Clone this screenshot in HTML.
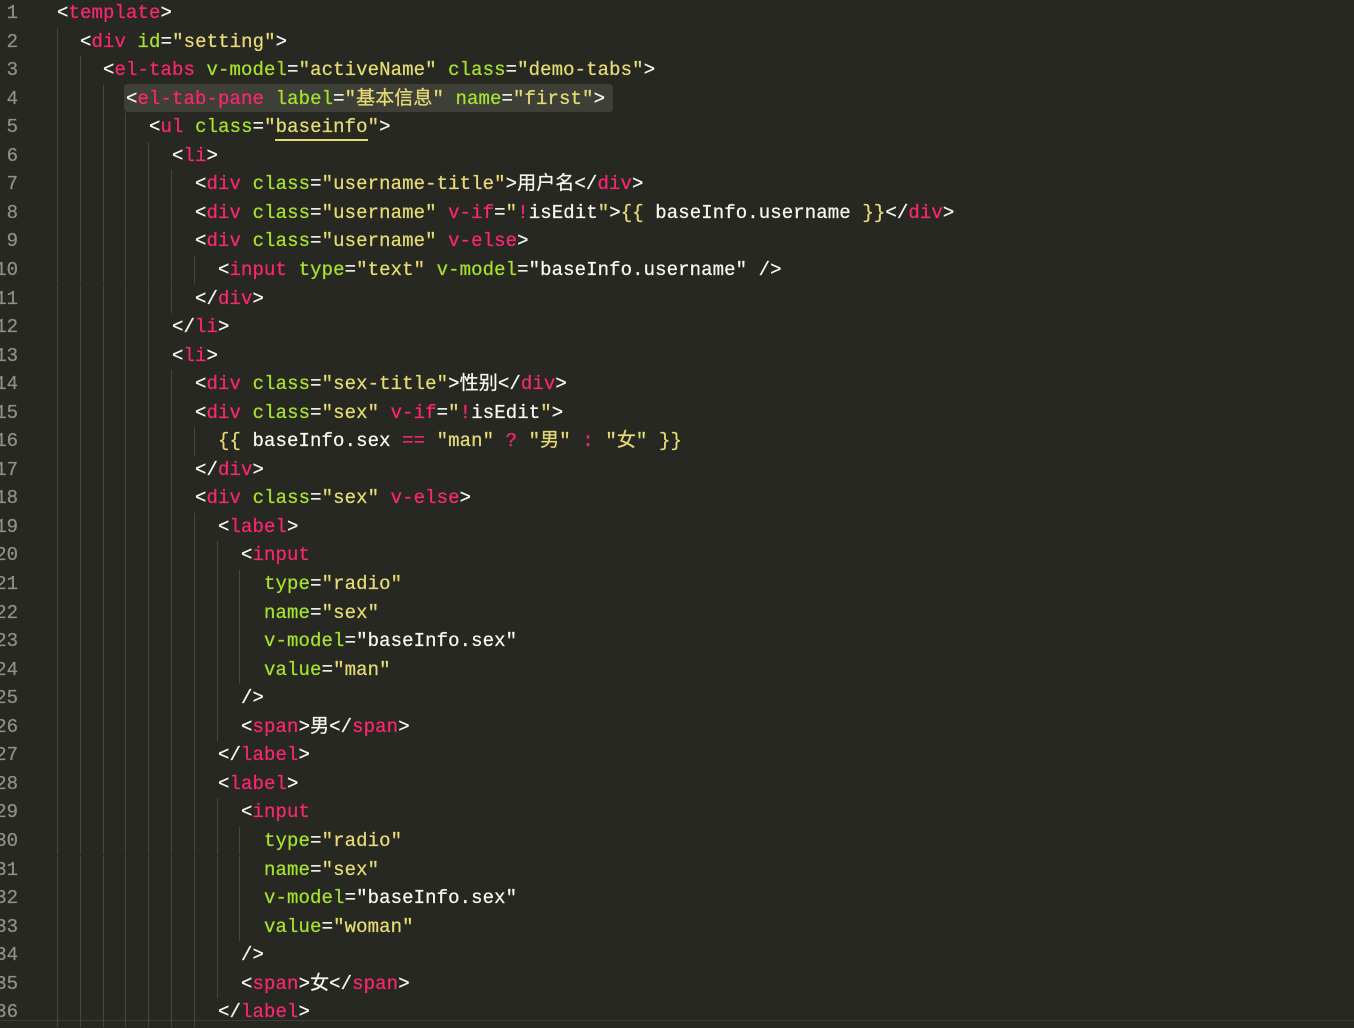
<!DOCTYPE html>
<html><head><meta charset="utf-8">
<style>
html,body{margin:0;padding:0;background:#272822;width:1354px;height:1028px;overflow:hidden}
#ed{position:relative;width:1354px;height:1028px;font-family:"Liberation Mono","Noto Sans CJK SC",monospace;font-size:19px;color:#f8f8f2;-webkit-text-stroke:0.25px}
.l{position:absolute;left:57px;height:28.55px;line-height:28.55px;white-space:pre;letter-spacing:0.1px}
.n{position:absolute;left:-40px;width:58px;text-align:right;height:28.55px;line-height:28.55px;color:#8f908a;white-space:pre}
.g{position:absolute;width:1px;background:#464741;height:28.55px}
.t{color:#f92672}.a{color:#a6e22e}.s{color:#e6db74}
.hl{position:absolute;left:124px;top:84px;width:489px;height:28px;background:#3e3f37;border-radius:4px}
.ul{position:absolute;left:275px;top:139px;width:93px;height:2px;background:#e6db74}
.bot{position:absolute;left:0;top:1020px;width:1354px;height:1px;background:#3b3c35}
</style></head><body><div id="ed">
<div class="hl"></div><div class="ul"></div><div class="bot"></div>
</div>
<script>
(function(){
function T(n){return '<span class="t">'+n+'</span>'}
function A(n){return '<span class="a">'+n+'</span>'}
function S(n){return '<span class="s">'+n+'</span>'}
var lt='&lt;',gt='&gt;';
function o(n){return lt+T(n)}
var L=[
[0,o('template')+gt],
[2,o('div')+' '+A('id')+'='+S('"setting"')+gt],
[4,o('el-tabs')+' '+A('v-model')+'='+S('"activeName"')+' '+A('class')+'='+S('"demo-tabs"')+gt],
[6,o('el-tab-pane')+' '+A('label')+'='+S('"基本信息"')+' '+A('name')+'='+S('"first"')+gt],
[8,o('ul')+' '+A('class')+'='+S('"baseinfo"')+gt],
[10,o('li')+gt],
[12,o('div')+' '+A('class')+'='+S('"username-title"')+gt+'用户名'+lt+'/'+T('div')+gt],
[12,o('div')+' '+A('class')+'='+S('"username"')+' '+T('v-if')+'='+S('"')+T('!')+'isEdit'+S('"')+gt+S('{{')+' baseInfo.username '+S('}}')+lt+'/'+T('div')+gt],
[12,o('div')+' '+A('class')+'='+S('"username"')+' '+T('v-else')+gt],
[14,o('input')+' '+A('type')+'='+S('"text"')+' '+A('v-model')+'="baseInfo.username" /'+gt],
[12,lt+'/'+T('div')+gt],
[10,lt+'/'+T('li')+gt],
[10,o('li')+gt],
[12,o('div')+' '+A('class')+'='+S('"sex-title"')+gt+'性别'+lt+'/'+T('div')+gt],
[12,o('div')+' '+A('class')+'='+S('"sex"')+' '+T('v-if')+'='+S('"')+T('!')+'isEdit'+S('"')+gt],
[14,S('{{')+' baseInfo.sex '+T('==')+' '+S('"man"')+' '+T('?')+' '+S('"男"')+' '+T(':')+' '+S('"女"')+' '+S('}}')],
[12,lt+'/'+T('div')+gt],
[12,o('div')+' '+A('class')+'='+S('"sex"')+' '+T('v-else')+gt],
[14,o('label')+gt],
[16,o('input')],
[18,A('type')+'='+S('"radio"')],
[18,A('name')+'='+S('"sex"')],
[18,A('v-model')+'="baseInfo.sex"'],
[18,A('value')+'='+S('"man"')],
[16,'/'+gt],
[16,o('span')+gt+'男'+lt+'/'+T('span')+gt],
[14,lt+'/'+T('label')+gt],
[14,o('label')+gt],
[16,o('input')],
[18,A('type')+'='+S('"radio"')],
[18,A('name')+'='+S('"sex"')],
[18,A('v-model')+'="baseInfo.sex"'],
[18,A('value')+'='+S('"woman"')],
[16,'/'+gt],
[16,o('span')+gt+'女'+lt+'/'+T('span')+gt],
[14,lt+'/'+T('label')+gt]
];
var ed=document.getElementById('ed'),h='',LH=28.55,CW=11.4;
for(var i=0;i<L.length;i++){
 var yy=(-1+i*LH).toFixed(2);
 h+='<div class="n" style="top:'+yy+'px">'+(i+1)+'</div>';
 for(var k=0;k<L[i][0]/2;k++){h+='<div class="g" style="left:'+Math.round(57+k*2*CW)+'px;top:'+yy+'px"></div>';}
 h+='<div class="l" style="top:'+yy+'px">'+' '.repeat(L[i][0])+L[i][1]+'</div>';
}
ed.insertAdjacentHTML('beforeend',h);
})();
</script>
</body></html>
